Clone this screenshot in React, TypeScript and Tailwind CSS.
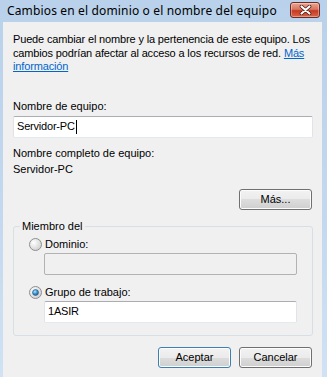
import React from "react";

const btn =
  "h-[21px] w-[73px] rounded-[3px] border text-[11px] text-black shadow-[inset_0_0_0_1px_#fcfcfc] bg-[linear-gradient(to_bottom,#f2f2f2_0%,#ebebeb_50%,#dddddd_50%,#cfcfcf_100%)]";

function Radio({ checked }: { checked?: boolean }) {
  return (
    <svg width="13" height="13" viewBox="0 0 13 13" className="shrink-0">
      <defs>
        <radialGradient id={checked ? "rc" : "ru"} cx="0.35" cy="0.35" r="0.8">
          <stop offset="0" stopColor="#ffffff" />
          <stop offset="1" stopColor="#c9c9c9" />
        </radialGradient>
        <radialGradient id="dot" cx="0.4" cy="0.35" r="0.7">
          <stop offset="0" stopColor="#b9e4fb" />
          <stop offset="0.5" stopColor="#3d95d4" />
          <stop offset="1" stopColor="#1c5a8f" />
        </radialGradient>
      </defs>
      <circle cx="6.5" cy="6.5" r="6" fill={`url(#${checked ? "rc" : "ru"})`} stroke="#8e8f8f" />
      {checked && <circle cx="6.5" cy="6.5" r="3" fill="url(#dot)" stroke="#215b8a" strokeWidth="0.6" />}
    </svg>
  );
}

function TextBox({ value, caret, disabled, className }: { value?: string; caret?: boolean; disabled?: boolean; className?: string }) {
  return (
    <div
      className={`flex h-[22px] items-center rounded-[2px] border px-[3px] text-[11px] tracking-[-0.2px] ${
        disabled
          ? "border-[#b2b2b2] bg-[#f0f0f0]"
          : "border-[#e2e3ea] border-t-[#abadb3] border-b-[#e3e9ef] bg-white"
      } ${className ?? ""}`}
    >
      <span>{value}</span>
      {caret && <span className="ml-px h-[14px] w-px bg-black" />}
    </div>
  );
}

export default function App() {
  return (
    <div className="flex h-[377px] w-[327px] flex-col overflow-hidden bg-[linear-gradient(to_bottom,#b9d1ea,#c4d9ef_60%,#d0e2f4)] font-['Liberation_Sans',Arial,sans-serif] text-black">
      <div className="flex h-[22px] items-center justify-between pl-[7px] pr-[7px]">
        <span className="font-['Noto_Sans',sans-serif] text-[12px] leading-none tracking-[0.15px]">
          Cambios en el dominio o el nombre del equipo
        </span>
        <div className="mt-[2px] flex h-[16px] w-[30px] items-center justify-center self-start rounded-[3px] border border-[#6d2b24] bg-[linear-gradient(to_bottom,#e9a594_0%,#d77560_45%,#c63a22_55%,#d8654a_100%)] shadow-[inset_0_0_0_1px_rgba(255,255,255,0.35)]">
          <svg width="13" height="10" viewBox="0 0 13 10">
            <path d="M2.5 1.5 L10.5 8.5 M10.5 1.5 L2.5 8.5" stroke="#3d1410" strokeWidth="3.6" strokeLinecap="round" />
            <path d="M2.5 1.5 L10.5 8.5 M10.5 1.5 L2.5 8.5" stroke="#ffffff" strokeWidth="2.2" strokeLinecap="round" />
          </svg>
        </div>
      </div>

      <div className="ml-[3px] mr-[5px] flex flex-1 flex-col bg-[#f0f0f0] px-[10px] pt-[11px] text-[11px]">
        <p className="-mr-[10px] whitespace-nowrap leading-[13.5px] tracking-[-0.15px]">
          Puede cambiar el nombre y la pertenencia de este equipo. Los
          <br />
          cambios podrían afectar al acceso a los recursos de red.{" "}
          <span className="text-[#0066cc] underline">
            Más
            <br />
            información
          </span>
        </p>

        <div className="mt-[26px] leading-[13px]">Nombre de equipo:</div>
        <TextBox value="Servidor-PC" caret className="mt-[3px] mr-[-1px]" />

        <div className="mt-[7px] leading-[16px]">Nombre completo de equipo:</div>
        <div className="leading-[16px]">Servidor-PC</div>

        <button className={`${btn} mt-[12px] self-end border-[#707070]`}>Más...</button>

        <fieldset className="mt-[10px] mr-[-1px] rounded-[3px] border border-[#d5dfe5] pb-[12px] pt-[5px]">
          <legend className="ml-[6px] px-[2px] leading-[13px]">Miembro del</legend>
          <div className="flex items-center gap-[3px] pl-[15px] leading-[13px]">
            <Radio />
            <span>Dominio:</span>
          </div>
          <TextBox disabled className="ml-[30px] mr-[15px] mt-[2px]" />
          <div className="mt-[11px] flex items-center gap-[3px] pl-[15px] leading-[13px]">
            <Radio checked />
            <span>Grupo de trabajo:</span>
          </div>
          <TextBox value="1ASIR" className="ml-[30px] mr-[15px] mt-[2px]" />
        </fieldset>

        <div className="mt-[11px] flex justify-end gap-[8px]">
          <button className={`${btn} border-[#3c7fb1] shadow-[inset_0_0_0_1px_#9fd5f4]`}>Aceptar</button>
          <button className={`${btn} border-[#707070]`}>Cancelar</button>
        </div>
      </div>
    </div>
  );
}
